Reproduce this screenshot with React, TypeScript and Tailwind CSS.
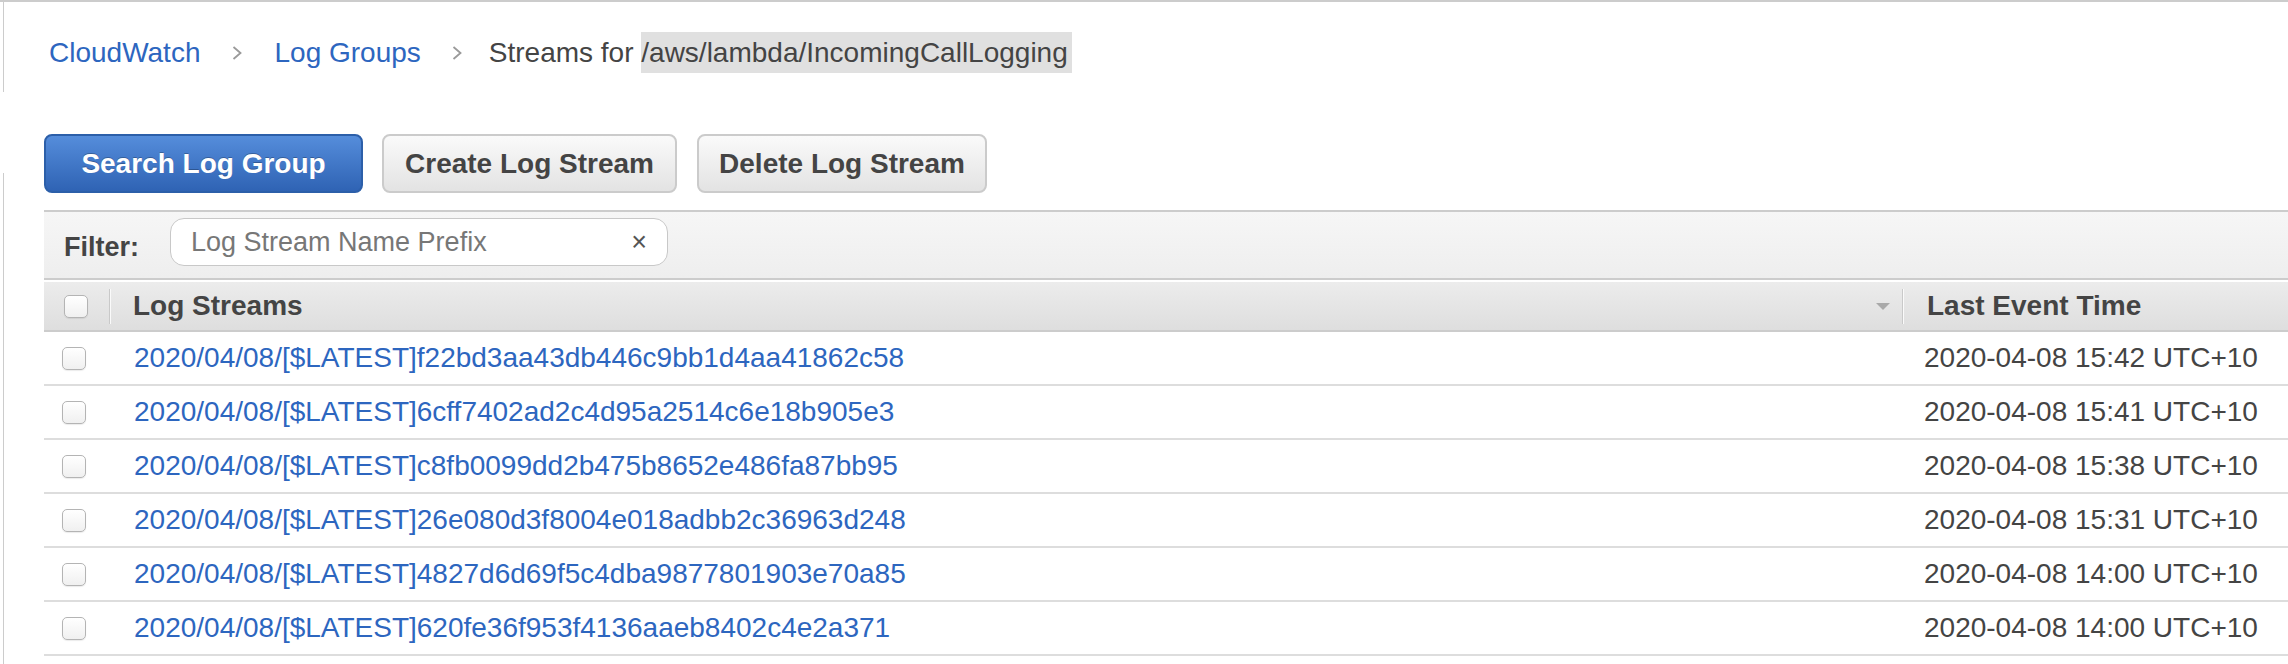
const streams = [
  { name: "2020/04/08/[$LATEST]f22bd3aa43db446c9bb1d4aa41862c58", time: "2020-04-08 15:42 UTC+10" },
  { name: "2020/04/08/[$LATEST]6cff7402ad2c4d95a2514c6e18b905e3", time: "2020-04-08 15:41 UTC+10" },
  { name: "2020/04/08/[$LATEST]c8fb0099dd2b475b8652e486fa87bb95", time: "2020-04-08 15:38 UTC+10" },
  { name: "2020/04/08/[$LATEST]26e080d3f8004e018adbb2c36963d248", time: "2020-04-08 15:31 UTC+10" },
  { name: "2020/04/08/[$LATEST]4827d6d69f5c4dba9877801903e70a85", time: "2020-04-08 14:00 UTC+10" },
  { name: "2020/04/08/[$LATEST]620fe36f953f4136aaeb8402c4e2a371", time: "2020-04-08 14:00 UTC+10" },
];

function Chevron() {
  return (
    <svg width="10" height="14" viewBox="0 0 10 14" className="shrink-0">
      <polyline points="1.5,1 8.5,7 1.5,13" fill="none" stroke="#9a9a9a" strokeWidth="1.8" />
    </svg>
  );
}

function Checkbox({ className = "" }: { className?: string }) {
  return (
    <span
      className={`block w-[24px] h-[23px] rounded-[5px] border border-[#b4b4b4] bg-gradient-to-b from-white to-[#f0f0f0] shadow-[0_1px_1px_rgba(0,0,0,0.08)] ${className}`}
    />
  );
}

function HeaderDivider() {
  return <span className="block w-px h-[35px] bg-[#c9c9c9] shadow-[1px_0_0_#fafafa] shrink-0" />;
}

export default function App() {
  return (
    <div className="w-[2288px] min-h-[664px] bg-white border-t-2 border-[#cccccc] flex font-['Liberation_Sans',Arial,sans-serif] text-[28px] text-[#444]">
      {/* left edge of the neighbouring panels */}
      <div className="w-[4px] shrink-0 flex flex-col">
        <div className="h-[90px] border-r border-[#cccccc]" />
        <div className="h-[81px]" />
        <div className="flex-1 border-r border-[#cccccc]" />
      </div>

      <main className="flex-1 pl-[40px]">
        {/* Breadcrumb */}
        <nav className="mt-[30px] h-[41px] pl-[5px] flex items-center leading-[41px]">
          <span className="text-[#2d66bf]">CloudWatch</span>
          <span className="ml-[32px]"><Chevron /></span>
          <span className="ml-[32px] text-[#2d66bf]">Log Groups</span>
          <span className="ml-[31px]"><Chevron /></span>
          <span className="ml-[27px] whitespace-pre">Streams for </span>
          <span className="bg-[#e0e0e0] pr-[4px]">/aws/lambda/IncomingCallLogging</span>
        </nav>

        {/* Actions */}
        <div className="mt-[61px] flex gap-[19px]">
          <button className="w-[319px] h-[59px] rounded-[8px] border-2 border-[#2c5fa9] bg-gradient-to-b from-[#558ddb] to-[#2f63b4] text-white font-bold [text-shadow:0_-1px_0_rgba(0,0,0,0.25)]">
            Search Log Group
          </button>
          <button className="w-[295px] h-[59px] rounded-[8px] border-2 border-[#cbcbcb] bg-gradient-to-b from-[#fafafa] to-[#e3e3e3] text-[#444] font-bold">
            Create Log Stream
          </button>
          <button className="ml-px w-[290px] h-[59px] rounded-[8px] border-2 border-[#cbcbcb] bg-gradient-to-b from-[#fafafa] to-[#e3e3e3] text-[#444] font-bold">
            Delete Log Stream
          </button>
        </div>

        {/* Filter */}
        <div className="mt-[17px] h-[70px] border-y-2 border-[#cccccc] bg-gradient-to-b from-[#f6f6f6] to-[#eeeeee] flex items-start pl-[20px] text-[27px]">
          <span className="mt-[19px] leading-[32px] font-bold">Filter:</span>
          <div className="ml-[31px] mt-[6px] w-[498px] h-[48px] rounded-[14px] border-[1.5px] border-[#c8c8c8] bg-white flex items-center pl-[20px] pr-[20px]">
            <span className="flex-1 text-[#777]">Log Stream Name Prefix</span>
            <span className="text-[#555]">×</span>
          </div>
        </div>

        {/* Table */}
        <div className="border-t-2 border-white">
          <div className="grid grid-cols-[65px_1fr_386px] h-[50px] items-center border-b-2 border-[#cccccc] bg-gradient-to-b from-[#ececec] to-[#dedede] font-bold">
            <div className="pl-[20px]"><Checkbox /></div>
            <div className="flex items-center">
              <HeaderDivider />
              <span className="ml-[23px]">Log Streams</span>
              <span className="flex-1" />
              <svg width="14" height="7" viewBox="0 0 14 7" className="mr-[12px]">
                <polygon points="0,0 14,0 7,7" fill="#a9a9a9" />
              </svg>
            </div>
            <div className="flex items-center">
              <HeaderDivider />
              <span className="ml-[24px]">Last Event Time</span>
            </div>
          </div>

          {streams.map((s) => (
            <div
              key={s.name}
              className="grid grid-cols-[65px_1fr_386px] h-[54px] items-center border-b-2 border-[#dddddd]"
            >
              <div className="pl-[18px]"><Checkbox /></div>
              <div className="pl-[25px] text-[#2d66bf]">{s.name}</div>
              <div className="pl-[22px]">{s.time}</div>
            </div>
          ))}
        </div>
      </main>
    </div>
  );
}
